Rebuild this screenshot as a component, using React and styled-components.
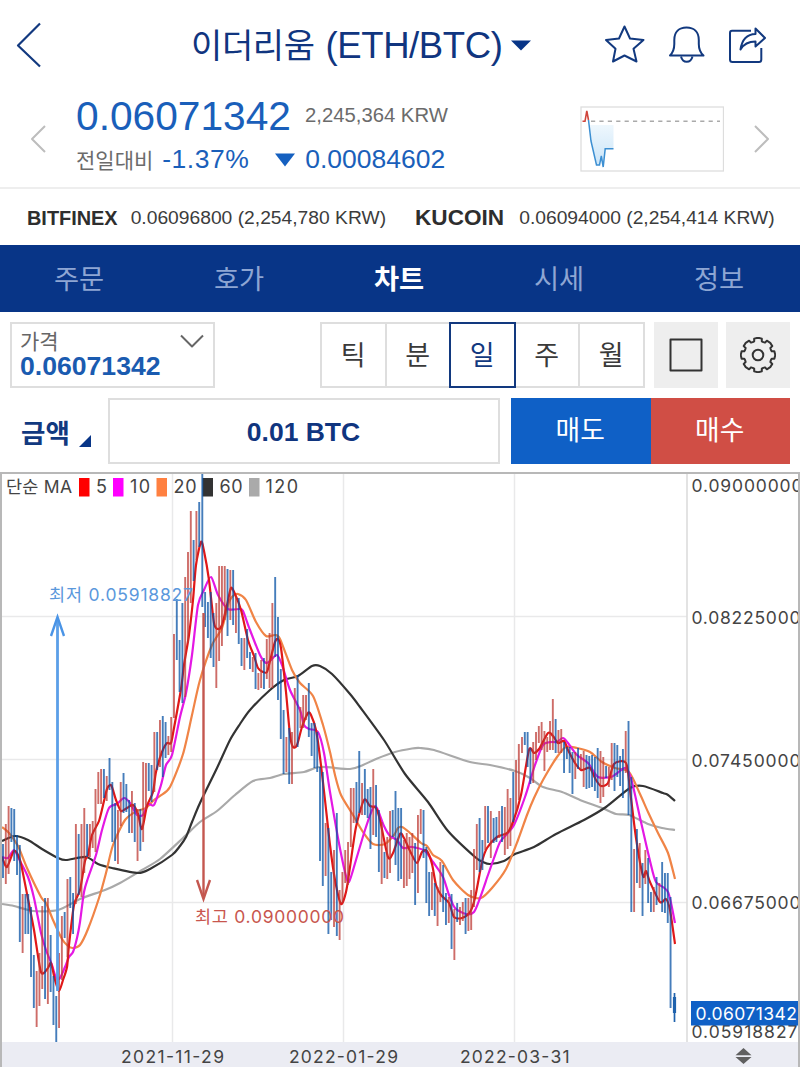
import styled, { createGlobalStyle } from 'styled-components';

const GlobalStyle = createGlobalStyle`
  * {
    box-sizing: border-box;
  }

  body {
    margin: 0;
    background: #ffffff;
    font-family: 'Liberation Sans', 'Noto Sans CJK KR', sans-serif;
  }
`;

const Screen = styled.div`
  width: 800px;
  height: 1067px;
  overflow: hidden;
  display: flex;
  flex-direction: column;
  background: #ffffff;
`;

const Header = styled.header`
  height: 90px;
  padding: 0 33px 0 15px;
  display: grid;
  grid-template-columns: 176px 1fr auto;
  align-items: center;
`;

const Title = styled.h1`
  margin: 0;
  padding-top: 2px;
  display: flex;
  align-items: center;
  color: #10357f;
  font-size: 36.5px;
  font-weight: 400;
  line-height: 50px;
  letter-spacing: -0.4px;
  white-space: nowrap;

  .ko {
    font-size: 34px;
    margin-right: 11px;
  }

  svg {
    margin: -2px 0 0 9px;
  }
`;

const Actions = styled.div`
  display: flex;
  align-items: center;
  gap: 22px;

  svg {
    display: block;
  }
`;

const Summary = styled.section`
  height: 99px;
  padding: 0 30px 0 30px;
  display: flex;
  border-bottom: 2px solid #eeeeee;

  .arrow {
    margin-top: 34px;
    flex: none;
  }
`;

const Figures = styled.div`
  width: 504px;
  margin-left: 30px;
`;

const Line = styled.div`
  display: flex;
  align-items: center;
  height: ${props => props.$height}px;
  white-space: nowrap;

  .down {
    margin: 2px 10px 0 26px;
  }
`;

const Price = styled.span`
  width: 229px;
  padding-top: 1px;
  color: #1a5fba;
  font-size: 40.7px;
`;

const Muted = styled.span`
  color: #6b6b6b;
  font-size: ${props => props.$size}px;
`;

const Change = styled.span`
  color: #1a5fba;
  font-size: 26.5px;
  letter-spacing: ${props => props.$spacing || 0}px;
  margin-left: ${props => props.$gap || 0}px;
`;

const Spark = styled.svg`
  margin: 16px 30px 0 0;
  flex: none;
`;

const Exchanges = styled.section`
  height: 56px;
  padding: 2px 0 0 27px;
  display: flex;
  align-items: center;
  color: #3c3c3c;
  font-size: 19.25px;
  white-space: nowrap;

  strong {
    color: #2e2e2e;
    font-size: 19.9px;
    margin-right: 13px;
  }

  strong.large {
    font-size: 22.6px;
    margin: 0 15px 0 29px;
  }
`;

const Nav = styled.nav`
  height: 67px;
  display: grid;
  grid-template-columns: repeat(5, 1fr);
  background: #083587;
`;

const NavItem = styled.a`
  display: flex;
  align-items: center;
  justify-content: center;
  padding: 0 2px 3px 0;
  color: ${props => (props.$active ? '#ffffff' : '#8ea6d3')};
  font-size: 27.3px;
  font-weight: ${props => (props.$active ? 700 : 400)};
`;

const Controls = styled.section`
  height: 160px;
  padding: 10px 9px 0 10px;
`;

const ControlRow = styled.div`
  display: flex;
  height: 66px;
  margin-bottom: 10px;
`;

const PriceSelect = styled.button`
  width: 205px;
  height: 66px;
  padding: 4px 9px 0 8px;
  border: 2px solid #dedede;
  background: #ffffff;
  display: grid;
  grid-template-columns: 1fr 24px;
  grid-template-rows: 25px 25px;
  text-align: left;
  font-family: inherit;

  .label {
    color: #666666;
    font-size: 21px;
    line-height: 27px;
  }

  .value {
    color: #1a5bb0;
    font-size: 26.6px;
    font-weight: 700;
    line-height: 27px;
  }

  svg {
    margin-top: 6px;
  }
`;

const Periods = styled.div`
  display: flex;
  margin: 0 9px 0 105px;
`;

const Period = styled.button`
  width: 66.5px;
  height: 66px;
  padding: 0 0 3px;
  margin-right: -2px;
  border: 2px solid ${props => (props.$active ? '#12397f' : '#dedede')};
  z-index: ${props => (props.$active ? 1 : 0)};
  background: #ffffff;
  color: ${props => (props.$active ? '#12397f' : '#3a3a3a')};
  font-family: inherit;
  font-size: 27px;
`;

const ToolButton = styled.button`
  width: 64px;
  height: 66px;
  margin-left: ${props => props.$gap || 0}px;
  padding: 0;
  border: 0;
  background: #eeeeee;
  display: flex;
  align-items: center;
  justify-content: center;
`;

const AmountLabel = styled.div`
  width: 98px;
  padding: 0 0 0 11px;
  display: flex;
  align-items: center;
  color: #12397f;
  font-size: 26.5px;
  font-weight: 700;
  line-height: 66px;

  span {
    padding-top: 5px;
  }

  svg {
    margin: 20px 0 0 9px;
  }
`;

const Amount = styled.div`
  width: 392px;
  border: 2px solid #dedede;
  margin-right: 11px;
  padding: 2px 1px 0 0;
  display: flex;
  align-items: center;
  justify-content: center;
  color: #10357f;
  font-size: 26.5px;
  font-weight: 700;
`;

const Trade = styled.button`
  width: 139.5px;
  height: 65.5px;
  padding: 0 1px 4px 0;
  border: 0;
  background: ${props => (props.$buy ? '#d04e45' : '#0f60c6')};
  color: #ffffff;
  font-family: inherit;
  font-size: 26.8px;
`;

const Chart = styled.section`
  flex: 1;
  border: 2px solid #b8b8b8;
  border-bottom: 0;

  svg {
    display: block;
  }
`;

const bar = (start, list) =>
  list
    .trim()
    .split(/\s+/)
    .map((item, i) => {
      const [high, low] = item.slice(1).split('-').map(Number);
      return { x: start + i * 2.803, up: item[0] === 'r', high, low };
    });

// r = up day, b = down day, then high-low in chart units
const BARS = [
  ...bar(
    3,
    `b844-878 r824-884 r806-874 b808-842 b809-861 b835-875 b845-942 r894-953
    b894-934 b894-934 b907-977 b955-1008 r971-1027 r953-1006 r906-989 b898-999
    r898-1004 b935-992 b976-1025 b996-1042 r953-1028 r916-980 b912-938 r879-957
    b877-908 b893-934 r824-904 b834-895 r824-897 r808-873 b824-857 r824-857
    r821-848 r789-852 r772-804 r769-804 b769-798 r776-801 b758-790 b782-842
    b803-861 r810-864 r782-826 b773-813 b784-812 b800-833 r791-833 b803-842
    r809-861 b809-851 r762-842 r763-810 b763-791 b765-802 r732-792 b732-770
    r720-767 b716-777 b722-758 r736-755 r717-752 r634-718 b599-660 b640-692
    b603-703 r577-697 r552-643 r511-603 b540-581 r511-560 b502-547`
  ),
  ...bar(
    202.3,
    `b474-607 b592-627 b602-638 b592-658 b613-667 r603-688 r566-661 r566-646
    r566-620 b569-636 r570-620 b570-625 r597-633 b598-644 b638-666 r638-670
    b629-658 b652-669 r657-672 b653-689 r673-690 r660-688 b658-689 r639-679
    r633-688 r603-688 b577-657 b617-700 b669-739 b710-774 r737-772 b728-784
    r732-784 r688-747 b675-747 r707-728 r695-728 r695-720 b683-737 b723-756
    b723-768 b732-772`
  ),
  ...bar(
    320,
    `b767-861 b772-886 r823-876 b828-934 b872-920 r850-927 b813-936 r890-940
    r872-903 r850-883 r842-885 r788-847 r788-823 b782-823 b751-813 r783-815
    b769-815 b789-818 b787-849 r769-835 b785-837 b810-872 r822-884 b852-878
    r837-879 r811-873`
  ),
  ...bar(
    392.7,
    `b810-837 b791-865 b808-881 b808-879 r840-888 r833-886 r837-879 r833-873
    b843-905 r815-893 r809-834 b810-858 b847-903 b872-916 r872-910 b883-916
    r887-926 r862-902 b865-912 b893-925 r897-923 b894-949 r909-960 b903-922
    r907-925 r902-921 b898-934 r898-931 r890-930 r849-907 r824-870 b818-872
    b840-870 r806-850 b806-843 r811-858 b818-843 b817-842 r811-838 b806-842
    r807-855 r789-849 r798-846 b772-822 r760-812 r744-800`
  ),
  ...bar(
    522,
    `r737-753 b732-745 b732-767 b748-784 r742-783 r732-760 r726-743 r722-750
    r731-771 r737-752 r721-750 r699-750 b719-753 r730-753 r729-753 b742-773
    b747-759 b747-773 b752-794 r752-779 b748-769 r754-770 r751-787 b755-789
    b756-788 b755-787 b757-791 b748-798 r751-803 r757-797 b766-778 r767-787
    r743-780 b743-791 b745-777 b756-786 b749-798 r731-773 b721-815 b777-912
    r849-912 b829-883 r843-888 b863-916 r850-884 b858-903 b892-912 r887-912
    b877-905 r883-902 b862-912 b873-913 b873-923 b897-1008`
  )
];

const AVERAGES = [
  {
    color: '#a9a9a9',
    points:
      '2,904 14,906 33,911 58,910 80,899 105,890 120,883 142,870 160,859 183,838 200,822 217,811 235,795 253,781 270,778 284,774 304,772 320,767 350,769 363,765 376,759 395,752 412,748.5 420,748 434,750 470,762 490,765 515,771 530,778 543,787 562,792 580,800 602,808 616,814 629,815 648,824 662,828 675,830'
  },
  {
    color: '#333333',
    points:
      '2,841 15,836 28,840 42,849 58,858 66,860 86,857 98,864 112,868 138,873 150,869 172,855 180,846 186,837 192,822 200,803 217,768 230,740 240,724 250,710 270,690 284,680 298,676 312,666 320,666 332,674 350,694 360,707 384,740 405,774 428,802 448,831 475,857 483,862 490,864 504,861 515,854 534,847 556,834 584,820 606,807 630,788 643,786 663,793 668,795 675,801'
  },
  {
    color: '#f08446',
    points:
      '2,827 9,833 18,846 27,868 41,897 46,903 53,920 62,939 68,946 73,948 80,945 88,929 99,898 106,873 113,845 125,820 137,811 146,808 154,800 160,796 170,787 183,754 192,715 200,680 212,645 222,628 229,602 233,596 238,594 246,600 256,622 266,636 275,635 280,639 292,670 300,683 313,696 323,725 330,752 335,775 341,795 353,815 363,832 373,844 385,844 394,835 398,828 402,827 409,832 421,843 427,846 433,855 442,861 453,880 468,895 481,898 492,888 506,869 518,840 527,815 534,798 543,780 557,757 566,747 577,748 590,752 602,762 615,768 629,772 640,794 648,812 658,833 668,853 675,879'
  },
  {
    color: '#e418e4',
    points:
      '2,857 8,858 14,850 20,861 28,877 34,898 41,933 46,950 52,965 56,978 60,978 65,967 69,957 73,952 77,938 80,922 84,892 88,878 96,855 102,830 109,808 117,804 124,798 130,803 137,815 143,815 148,804 154,805 161,785 166,765 172,755 180,717 186,693 192,655 198,605 204,590 211,577 218,595 228,609 240,609 243,611 250,630 260,655 266,663 271,660 277,655 282,665 290,690 300,710 304,725 309,729 318,732 324,753 330,792 338,838 345,872 349,882 356,860 365,830 373,808 377,808 384,826 390,836 397,840 403,848 412,847 425,851 433,862 443,877 449,895 455,908 466,914 474,912 480,898 488,875 494,858 500,842 506,835 514,825 525,797 535,765 543,745 552,742 557,742 563,738 568,743 577,755 588,763 598,777 611,777 616,774 626,768 632,782 641,822 650,861 656,882 668,892 675,923'
  },
  {
    color: '#e01818',
    points:
      '2,857 7,867 14,851 20,860 28,899 34,930 41,972 48,968 51,963 55,980 59,991 63,980 67,967 69,945 74,905 80,890 85,861 88,855 92,835 99,821 104,801 107,789 110,785 112,787 116,800 121,811 127,808 133,805 138,814 142,829 147,806 153,792 156,772 162,752 167,743 171,743 174,728 181,689 184,665 189,635 193,600 196,565 201,542 204,551 209,580 214,623 218,629 222,625 227,605 231,588 235,594 241,610 248,640 254,656 258,668 263,672 267,672 270,661 275,642 278,639 281,648 286,692 290,735 293,747 297,745 302,727 308,713 311,715 316,730 320,757 325,800 330,845 335,880 341,904 346,892 350,867 356,827 364,800 370,806 376,808 380,820 388,857 393,853 400,834 404,838 411,853 417,863 422,852 427,851 432,864 436,885 441,895 449,903 454,917 462,918 470,912 475,898 482,862 487,848 497,837 507,833 513,822 521,795 529,750 534,753 539,749 548,733 553,736 558,743 564,741 568,750 575,763 581,770 585,769 590,768 596,780 601,786 608,783 614,764 626,763 630,790 636,838 643,876 646,871 650,882 660,902 666,899 670,910 675,944'
  }
];

const smoothPath = source => {
  const pts = source.split(' ').map(pair => pair.split(',').map(Number));
  const k = 0.13;
  let d = `M${pts[0].join(' ')}`;
  for (let i = 0; i < pts.length - 1; i += 1) {
    const before = pts[Math.max(i - 1, 0)];
    const [x1, y1] = pts[i];
    const [x2, y2] = pts[i + 1];
    const after = pts[Math.min(i + 2, pts.length - 1)];
    d += `C${x1 + (x2 - before[0]) * k} ${y1 + (y2 - before[1]) * k}`;
    d += ` ${x2 - (after[0] - x1) * k} ${y2 - (after[1] - y1) * k} ${x2} ${y2}`;
  }
  return d;
};

const LEGEND = [
  { label: '5', color: '#ff0000', x: 79, textX: 96, width: 10 },
  { label: '10', color: '#ff00ff', x: 113, textX: 130, width: 20 },
  { label: '20', color: '#ff8040', x: 156.5, textX: 173.5, width: 23 },
  { label: '60', color: '#333333', x: 202.5, textX: 219.5, width: 23 },
  { label: '120', color: '#aaaaaa', x: 249, textX: 265.5, width: 32.5 }
];

const PRICE_LABELS = [
  { label: '0.09000000', y: 491.5, width: 111 },
  { label: '0.08225000', y: 624, width: 109 },
  { label: '0.07450000', y: 767, width: 109 },
  { label: '0.06675000', y: 909, width: 109 },
  { label: '0.05918827', y: 1037.5, width: 106 }
];

const DATE_LABELS = [
  { label: '2021-11-29', x: 121, width: 103 },
  { label: '2022-01-29', x: 289, width: 109 },
  { label: '2022-03-31', x: 460, width: 109.5 }
];

const ChartSvg = styled.svg`
  text {
    font-family: Inter, 'Noto Sans CJK KR', sans-serif;
    font-size: 17.5px;
    fill: #444444;
  }

  text.legend {
    font-size: 18px;
  }

  text.low {
    fill: #5a98dc;
  }

  text.high {
    fill: #c8564e;
  }

  text.current {
    fill: #ffffff;
  }

  .grid {
    stroke: #e9e9ea;
    stroke-width: 1.5;
  }

  .edge {
    stroke: #dcdcdc;
    stroke-width: 1.6;
  }
`;

const Stroke = styled.svg`
  fill: none;
  stroke: ${props => props.$color || '#12397f'};
  stroke-width: ${props => props.$width || 2};
  stroke-linejoin: round;
`;

const gearPath = () => {
  const points = [];
  for (let i = 0; i < 8; i += 1) {
    const base = (i * Math.PI) / 4 - Math.PI / 2;
    [[-0.27, 14.2], [-0.23, 16.8], [0, 17.3], [0.23, 16.8], [0.27, 14.2], [0.3927, 13.9]].forEach(
      ([angle, r]) => {
        const x = 18 + r * Math.cos(base + angle);
        const y = 18 + r * Math.sin(base + angle);
        points.push(`${x.toFixed(2)} ${y.toFixed(2)}`);
      }
    );
  }
  return `M${points.join('L')}Z`;
};

const PriceChart = () => (
  <ChartSvg width="796" height="593" viewBox="2 474 796 593">
    <rect x="2" y="1042" width="796" height="25" fill="#ebecf3" />
    {[616.5, 759.5, 902.5].map(y => (
      <line key={y} className="grid" x1="2" x2="687" y1={y} y2={y} />
    ))}
    {[172.5, 343.5, 514.5].map(x => (
      <line key={x} className="grid" x1={x} x2={x} y1="474" y2="1042" />
    ))}
    <line className="edge" x1="687" x2="687" y1="474" y2="1042" />

    <text x="6" y="493" textLength="66">
      단순 MA
    </text>
    {LEGEND.map(({ label, color, x, textX, width }) => (
      <g key={label}>
        <rect x={x} y="478" width="10.5" height="18.5" fill={color} />
        <text className="legend" x={textX} y="493" textLength={width}>
          {label}
        </text>
      </g>
    ))}

    {AVERAGES.map(({ color, points }) => (
      <path
        key={color}
        d={smoothPath(points)}
        fill="none"
        stroke={color}
        strokeWidth="2.2"
        strokeLinejoin="round"
      />
    ))}
    <g opacity="0.74" strokeWidth="1.9">
      {BARS.map(({ x, up, high, low }) => (
        <line
          key={x}
          x1={x}
          x2={x}
          y1={high}
          y2={low}
          stroke={up ? '#bd3a34' : '#0550a4'}
        />
      ))}
    </g>
    <path d="M674.5 993V1022" stroke="#1f62ad" strokeWidth="1.7" />
    <path d="M674.5 997V1013" stroke="#1f62ad" strokeWidth="3.2" />

    <text className="low" x="49" y="601" textLength="144">
      최저 0.05918827
    </text>
    <path d="M57.5 618V991" stroke="#5b9fe8" strokeWidth="2.8" />
    <path d="M51 636L57.5 617L64 636" fill="none" stroke="#4a94e6" strokeWidth="2.4" />
    <path d="M203.5 613V898" stroke="#c4574f" strokeWidth="2.4" />
    <path d="M197 880L203.5 899L210 880" fill="none" stroke="#c4574f" strokeWidth="2.4" />
    <text className="high" x="195" y="923" textLength="149">
      최고 0.09000000
    </text>

    {PRICE_LABELS.map(({ label, y, width }) => (
      <text key={label} x="691.5" y={y} textLength={width}>
        {label}
      </text>
    ))}
    <rect x="691" y="1001" width="107" height="24.5" fill="#0f60c6" />
    <text className="current" x="695.5" y="1020" textLength="101.5">
      0.06071342
    </text>
    {DATE_LABELS.map(({ label, x, width }) => (
      <text key={label} x={x} y="1062.5" textLength={width}>
        {label}
      </text>
    ))}
    <path d="M735.5 1055.2L743.5 1048L751.5 1055.2ZM735.5 1057L743.5 1064L751.5 1057Z" fill="#606060" />
  </ChartSvg>
);

const App = () => (
  <Screen>
    <GlobalStyle />
    <Header>
      <Stroke width="28" height="48" $width="2.2">
        <path d="M25 2.5L3 24.5L25 45.5" />
      </Stroke>
      <Title>
        <span className="ko">이더리움</span>
        (ETH/BTC)
        <svg width="20" height="11">
          <path d="M0 0.5H20L10 10.5Z" fill="#083587" />
        </svg>
      </Title>
      <Actions>
        <Stroke width="42" height="42" viewBox="604 24 42 42">
          <path d="M624.5 26.5L630 38.5L643.5 40L633.5 48.8L636.5 61.5L624.5 55.5L613 61.5L615.5 48.8L606 40L619 38.5Z" />
        </Stroke>
        <Stroke width="38" height="42" viewBox="669 24 38 42">
          <path d="M671 55.5C674.5 52 675.3 49 675.3 44V40C675.3 32 680 27.5 687.5 27.5S699.8 32 699.8 40V44C699.8 49 700.5 52 704.5 55.5Z" />
          <path d="M682 56.5C683 60.5 685 61.8 687.7 61.8S692.5 60.5 693.5 56.5" />
        </Stroke>
        <Stroke width="39" height="42" viewBox="729 24 39 42">
          <path d="M752 30.7H733Q731 30.7 731 33V59.5Q731 62 733.5 62H760Q762.3 62 762.3 59.5V48" />
          <path d="M741.5 49.5C743 39.5 748 34.2 756.5 34V28.5L766 38L756.5 46.5V41.5C750 41.5 745 43.5 741.5 49.5Z" />
        </Stroke>
      </Actions>
    </Header>

    <Summary>
      <Stroke className="arrow" width="16" height="30" $color="#bdbdbd">
        <path d="M15 2L2 15L15 28" />
      </Stroke>
      <Figures>
        <Line $height={51}>
          <Price>0.06071342</Price>
          <Muted $size={20.3}>2,245,364 KRW</Muted>
        </Line>
        <Line $height={36}>
          <Muted $size={21}>전일대비</Muted>
          <Change $gap={9} $spacing={0.5}>
            -1.37%
          </Change>
          <svg className="down" width="20" height="14">
            <path d="M0 0.5H20L10 13.5Z" fill="#1560c0" />
          </svg>
          <Change>0.00084602</Change>
        </Line>
      </Figures>
      <Spark width="144" height="66" viewBox="580 106 144 66">
        <defs>
          <linearGradient id="fall" x1="0" x2="0" y1="0" y2="1">
            <stop offset="0" stopColor="#eef7fd" />
            <stop offset="1" stopColor="#c9e4f8" />
          </linearGradient>
        </defs>
        <rect x="581" y="107" width="142.5" height="64" fill="#fff" stroke="#dddddd" strokeWidth="1.3" />
        <path d="M589 125H613.5V148.5H605L603 167L601 155L599 165H597L593 148Z" fill="url(#fall)" />
        <path d="M591 121.3H720" stroke="#aaaaaa" strokeWidth="1.5" strokeDasharray="4.2 4.2" />
        <path d="M582.5 121.3H585L586.8 111L588.5 120" fill="none" stroke="#d0453c" strokeWidth="1.6" />
        <path d="M588.5 120L591 141L596.5 165H599.5L601.3 156L603.2 167L605.2 148.8H613.5" fill="none" stroke="#3c8fd2" strokeWidth="1.5" />
      </Spark>
      <Stroke className="arrow" width="16" height="30" $color="#bdbdbd">
        <path d="M1 2L14 15L1 28" />
      </Stroke>
    </Summary>

    <Exchanges>
      <strong>BITFINEX</strong>
      <span>0.06096800 (2,254,780 KRW)</span>
      <strong className="large">KUCOIN</strong>
      <span>0.06094000 (2,254,414 KRW)</span>
    </Exchanges>

    <Nav>
      <NavItem>주문</NavItem>
      <NavItem>호가</NavItem>
      <NavItem $active>차트</NavItem>
      <NavItem>시세</NavItem>
      <NavItem>정보</NavItem>
    </Nav>

    <Controls>
      <ControlRow>
        <PriceSelect>
          <span className="label">가격</span>
          <Stroke width="24" height="15" $color="#666666">
            <path d="M1 1.5L12 12.5L23 1.5" />
          </Stroke>
          <span className="value">0.06071342</span>
        </PriceSelect>
        <Periods>
          <Period>틱</Period>
          <Period>분</Period>
          <Period $active>일</Period>
          <Period>주</Period>
          <Period>월</Period>
        </Periods>
        <ToolButton $gap={2}>
          <Stroke width="34" height="34" $color="#333333">
            <rect x="1.5" y="1.5" width="31" height="31" />
          </Stroke>
        </ToolButton>
        <ToolButton $gap={8.5}>
          <Stroke width="36" height="36" $color="#333333">
            <path d={gearPath()} />
            <circle cx="18" cy="18" r="5.3" />
          </Stroke>
        </ToolButton>
      </ControlRow>
      <ControlRow>
        <AmountLabel>
          <span>금액</span>
          <svg width="12" height="12">
            <path d="M12 0V12H0Z" fill="#083587" />
          </svg>
        </AmountLabel>
        <Amount>0.01 BTC</Amount>
        <Trade>매도</Trade>
        <Trade $buy>매수</Trade>
      </ControlRow>
    </Controls>

    <Chart>
      <PriceChart />
    </Chart>
  </Screen>
);

export default App;
